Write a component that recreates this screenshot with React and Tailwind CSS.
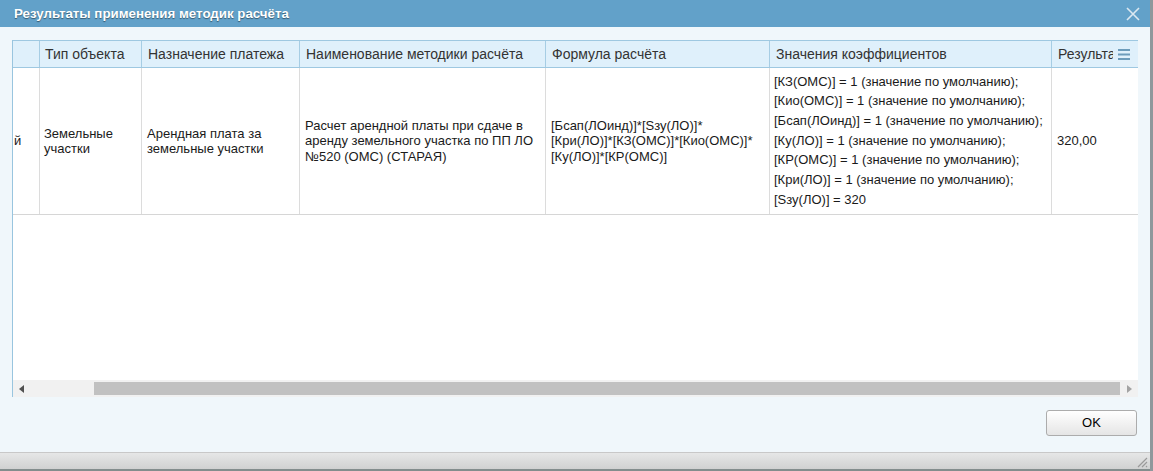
import React from "react";

const headers = [
  "",
  "Тип объекта",
  "Назначение платежа",
  "Наименование методики расчёта",
  "Формула расчёта",
  "Значения коэффициентов",
  "Результат",
];

const values = [
  "[КЗ(ОМС)] = 1 (значение по умолчанию);",
  "[Кио(ОМС)] = 1 (значение по умолчанию);",
  "[Бсап(ЛОинд)] = 1 (значение по умолчанию);",
  "[Ку(ЛО)] = 1 (значение по умолчанию);",
  "[КР(ОМС)] = 1 (значение по умолчанию);",
  "[Кри(ЛО)] = 1 (значение по умолчанию);",
  "[Sзу(ЛО)] = 320",
];

export default function App() {
  return (
    <div className="w-[1153px] h-[471px] flex bg-[#8f989c] overflow-hidden font-['Liberation_Sans',Arial,sans-serif]">
      <div className="w-[1150px] h-full flex flex-col bg-[#f0f7fb]">
        {/* Title bar */}
        <div className="h-[27px] shrink-0 bg-[#62a1c9] flex items-center justify-between pl-[14px] pr-[10px]">
          <span className="text-[13.3px] font-bold text-white [text-shadow:0_1px_1px_rgba(0,0,0,0.45)] leading-none">
            Результаты применения методик расчёта
          </span>
          <svg width="14" height="14" viewBox="0 0 14 14" className="mt-[1px]">
            <path d="M1 1 L13 13 M13 1 L1 13" stroke="#dbe8f1" strokeWidth="1.6" />
          </svg>
        </div>

        {/* Body */}
        <div className="flex-1 flex flex-col px-[12px] pt-[13px]">
          <div className="w-[1126px] h-[357px] bg-white border-l border-[#99c5df] flex flex-col">
            {/* Header */}
            <div className="h-[28px] shrink-0 flex bg-[#dff0fb] border-t border-b border-[#9ec8e1] text-[14px] text-[#333]">
              <div className="w-[27px] shrink-0 border-r border-[#a6cde4]" />
              <div className="w-[102px] shrink-0 border-r border-[#a6cde4] flex items-center px-[5px] whitespace-nowrap overflow-hidden">
                {headers[1]}
              </div>
              <div className="w-[158px] shrink-0 border-r border-[#a6cde4] flex items-center px-[6px] whitespace-nowrap overflow-hidden">
                {headers[2]}
              </div>
              <div className="w-[246px] shrink-0 border-r border-[#a6cde4] flex items-center px-[6px] whitespace-nowrap overflow-hidden">
                {headers[3]}
              </div>
              <div className="w-[224px] shrink-0 border-r border-[#a6cde4] flex items-center px-[6px] whitespace-nowrap overflow-hidden">
                {headers[4]}
              </div>
              <div className="w-[282px] shrink-0 border-r border-[#a6cde4] flex items-center px-[6px] whitespace-nowrap overflow-hidden">
                {headers[5]}
              </div>
              <div className="w-[86px] shrink-0 flex items-center pl-[6px] pr-[6px] whitespace-nowrap">
                <span className="w-[55px] overflow-hidden">{headers[6]}</span>
                <svg width="12" height="11" viewBox="0 0 12 11" className="ml-[5px] shrink-0">
                  <rect x="0" y="0" width="12" height="2" fill="#6d9cbb" />
                  <rect x="0" y="4.5" width="12" height="2" fill="#6d9cbb" />
                  <rect x="0" y="9" width="12" height="2" fill="#6d9cbb" />
                </svg>
              </div>
            </div>

            {/* Data row */}
            <div className="h-[147px] shrink-0 flex border-b border-[#d6d6d6] text-[13px] text-[#1a1a1a] leading-[15.5px]">
              <div className="w-[27px] shrink-0 border-r border-[#dcdcdc] flex items-center pl-[1px] overflow-hidden">
                й
              </div>
              <div className="w-[102px] shrink-0 border-r border-[#dcdcdc] flex items-center px-[4px]">
                <span>Земельные участки</span>
              </div>
              <div className="w-[158px] shrink-0 border-r border-[#dcdcdc] flex items-center px-[5px]">
                <span>Арендная плата за земельные участки</span>
              </div>
              <div className="w-[246px] shrink-0 border-r border-[#dcdcdc] flex items-center px-[5px]">
                <span>Расчет арендной платы при сдаче в аренду земельного участка по ПП ЛО №520 (ОМС) (СТАРАЯ)</span>
              </div>
              <div className="w-[224px] shrink-0 border-r border-[#dcdcdc] flex items-center px-[5px]">
                <span>
                  [Бсап(ЛОинд)]*[Sзу(ЛО)]*
                  <br />
                  [Кри(ЛО)]*[КЗ(ОМС)]*[Кио(ОМС)]*
                  <br />
                  [Ку(ЛО)]*[КР(ОМС)]
                </span>
              </div>
              <div className="w-[282px] shrink-0 border-r border-[#dcdcdc] flex flex-col justify-center px-[4px] pb-[1px]">
                {values.map((v) => (
                  <div key={v} className="leading-[19.7px] whitespace-nowrap">
                    {v}
                  </div>
                ))}
              </div>
              <div className="w-[86px] shrink-0 flex items-center px-[5px] whitespace-nowrap">
                320,00
              </div>
            </div>

            <div className="flex-1" />

            {/* Horizontal scrollbar */}
            <div className="h-[17px] shrink-0 flex items-center bg-[#f1f1f1]">
              <div className="w-[17px] h-full shrink-0 flex items-center justify-center">
                <svg width="5" height="8" viewBox="0 0 5 8">
                  <path d="M5 0 L0 4 L5 8 Z" fill="#505050" />
                </svg>
              </div>
              <div className="w-[64px] shrink-0" />
              <div className="flex-1 h-[13px] bg-[#c1c1c1]" />
              <div className="w-[18px] h-full shrink-0 flex items-center justify-center">
                <svg width="5" height="8" viewBox="0 0 5 8">
                  <path d="M0 0 L5 4 L0 8 Z" fill="#a3a3a3" />
                </svg>
              </div>
            </div>
          </div>

          {/* Footer */}
          <div className="flex justify-end pt-[13px] pr-[1px]">
            <button className="w-[91px] h-[26px] rounded-[3px] border border-[#acacac] bg-gradient-to-b from-[#ffffff] to-[#e5e5e5] text-[13px] text-black font-medium flex items-center justify-center">
              OK
            </button>
          </div>
        </div>

        {/* Status bar */}
        <div className="h-[19px] shrink-0 border-t border-[#c8c8c8] border-b-2 border-b-[#838d8d] bg-gradient-to-b from-[#e6e7e7] to-[#d0d1d1] flex justify-end items-end pr-[2px] pb-[1px]">
          <svg width="12" height="12" viewBox="0 0 12 12">
            <path d="M11 2 L2 11 M11 6 L6 11 M11 10 L10 11" stroke="#9a9a9a" strokeWidth="1.2" />
          </svg>
        </div>
      </div>
    </div>
  );
}
